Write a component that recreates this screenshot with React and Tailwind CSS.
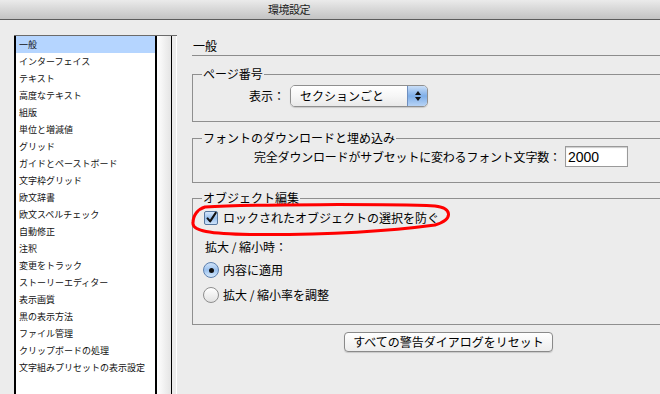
import React from "react";

const items = [
  "一般",
  "インターフェイス",
  "テキスト",
  "高度なテキスト",
  "組版",
  "単位と増減値",
  "グリッド",
  "ガイドとペーストボード",
  "文字枠グリッド",
  "欧文辞書",
  "欧文スペルチェック",
  "自動修正",
  "注釈",
  "変更をトラック",
  "ストーリーエディター",
  "表示画質",
  "黒の表示方法",
  "ファイル管理",
  "クリップボードの処理",
  "文字組みプリセットの表示設定",
];

const Radio = ({ checked }) => (
  <span
    className={
      "w-[16px] h-[16px] rounded-full border flex items-center justify-center shrink-0 " +
      (checked
        ? "border-[#5b7fae] bg-gradient-to-b from-[#cfe2f8] via-[#9cc2ee] to-[#d5e8fb]"
        : "border-[#8e8e8e] bg-gradient-to-b from-[#ffffff] to-[#e2e2e2]")
    }
  >
    {checked && <span className="w-[5px] h-[5px] rounded-full bg-[#111]" />}
  </span>
);

const App = () => {
  return (
    <div className="w-[660px] h-[394px] overflow-hidden bg-[#ececec] text-black font-['Noto_Sans_CJK_JP',sans-serif]">
      {/* title bar */}
      <div className="h-[20px] border-b border-[#5c5c5c] bg-gradient-to-b from-[#ebebeb] to-[#c3c3c3] flex items-center">
        <span className="ml-[268px] text-[11px] leading-none text-[#1a1a1a] tracking-[-0.5px]">
          環境設定
        </span>
      </div>

      <div className="flex items-start pl-[14px]">
        {/* left list */}
        <div className="mt-[15px] flex h-[360px] w-[163px] shrink-0 border-t border-[#6b6b6b]">
          <ul className="w-[143px] bg-white border-l-2 border-r-2 border-black">
            {items.map((it, i) => (
              <li
                key={it}
                className={
                  "h-[17px] pl-[3px] flex items-center text-[9px] leading-none text-[#111] whitespace-nowrap " +
                  (i === 0 ? "bg-[#b5d5ff]" : "")
                }
              >
                {it}
              </li>
            ))}
          </ul>
          <div className="w-[15px] bg-gradient-to-r from-white to-[#e4e4e4] border-r border-black" />
          <div className="w-[5px] border-r border-white" />
        </div>

        {/* right panel */}
        <div className="relative ml-[15px] w-[513px] shrink-0 text-[12px]">
          <div className="mt-[19px] pl-[1px] pb-[2px] leading-[14px] border-b border-[#8c8c8c]">
            一般
          </div>

          {/* ページ番号 */}
          <fieldset className="mt-[11px] h-[55px] border border-[#8f8f8f]">
            <legend className="ml-[9px] px-[1px] leading-[14px]">ページ番号</legend>
            <div className="flex items-center mt-[4px]">
              <span className="w-[92px] text-right leading-[14px]">表示：</span>
              <div className="ml-[5px] w-[138px] h-[22px] flex rounded-[5px] border border-[#8f8f8f] overflow-hidden shadow-[0_1px_1px_rgba(0,0,0,0.15)]">
                <div className="flex-1 flex items-center pl-[9px] bg-gradient-to-b from-white via-[#f6f6f6] to-[#e9e9e9] leading-none">
                  セクションごと
                </div>
                <div className="w-[20px] flex flex-col items-center justify-center gap-[2px] border-l border-[#6f8fbf] bg-gradient-to-b from-[#c9def7] via-[#7eaee8] to-[#b7d3f5]">
                  <svg width="6" height="4" viewBox="0 0 6 4">
                    <path d="M3 0 L6 4 L0 4 Z" fill="#111" />
                  </svg>
                  <svg width="6" height="4" viewBox="0 0 6 4">
                    <path d="M0 0 L6 0 L3 4 Z" fill="#111" />
                  </svg>
                </div>
              </div>
            </div>
          </fieldset>

          {/* フォントのダウンロードと埋め込み */}
          <fieldset className="mt-[9px] h-[52px] border border-[#8f8f8f]">
            <legend className="ml-[9px] px-[1px] leading-[14px]">
              フォントのダウンロードと埋め込み
            </legend>
            <div className="flex items-center mt-[1px]">
              <span className="ml-[61px] w-[311px] leading-[14px] whitespace-nowrap tracking-[-0.2px]">
                完全ダウンロードがサブセットに変わるフォント文字数：
              </span>
              <div className="w-[63px] h-[21px] bg-white border border-[#9a9a9a] shadow-[inset_0_1px_1px_rgba(0,0,0,0.2)] flex items-center pl-[2px] font-['Liberation_Sans',sans-serif] text-[14px] leading-none">
                2000
              </div>
            </div>
          </fieldset>

          {/* オブジェクト編集 */}
          <fieldset className="mt-[8px] h-[134px] border border-[#8f8f8f]">
            <legend className="ml-[9px] px-[1px] leading-[14px]">オブジェクト編集</legend>
            <div className="flex items-center h-[16px] mt-[5px] ml-[11px]">
              <span className="w-[14px] h-[14px] rounded-[2px] border border-[#56779f] bg-gradient-to-b from-[#d6e7fb] via-[#98c0ee] to-[#cfe3fa] flex items-center justify-center">
                <svg width="14" height="14" viewBox="0 0 14 14">
                  <path
                    d="M3 7.5 L6 11 L12.5 1"
                    fill="none"
                    stroke="#111"
                    strokeWidth="2.4"
                    strokeLinecap="round"
                    strokeLinejoin="round"
                  />
                </svg>
              </span>
              <span className="ml-[5px] leading-[14px]">
                ロックされたオブジェクトの選択を防ぐ
              </span>
            </div>
            <div className="mt-[14px] ml-[12px] leading-[14px]">拡大 / 縮小時：</div>
            <div className="flex items-center mt-[8px] ml-[10px] h-[16px]">
              <Radio checked />
              <span className="ml-[4px] leading-[14px]">内容に適用</span>
            </div>
            <div className="flex items-center mt-[9px] ml-[10px] h-[16px]">
              <Radio />
              <span className="ml-[4px] leading-[14px]">拡大 / 縮小率を調整</span>
            </div>
          </fieldset>

          <div className="flex justify-center mt-[7px]">
            <button className="w-[209px] h-[20px] rounded-[4px] border border-[#8a8a8a] bg-gradient-to-b from-white to-[#ededed] shadow-[0_1px_1px_rgba(0,0,0,0.15)] text-[12px] leading-none">
              すべての警告ダイアログをリセット
            </button>
          </div>

          {/* red annotation */}
          <svg
            className="absolute left-[-2px] top-[183px]"
            width="266"
            height="36"
            viewBox="0 0 266 36"
          >
            <path
              d="M15 4 C60 1, 200 1, 245 3 C262 5, 264 16, 245 22 C200 28, 130 32, 60 31.5 C20 31, 2 28, 3 20 C3 12, 8 6, 15 4 Z"
              fill="none"
              stroke="#ff0000"
              strokeWidth="3"
            />
          </svg>
        </div>
      </div>
    </div>
  );
};

export default App;
